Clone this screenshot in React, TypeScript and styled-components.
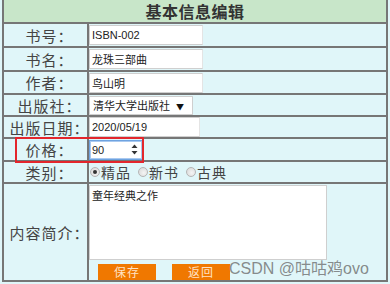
import React from 'react';
import styled, { createGlobalStyle } from 'styled-components';

const GlobalStyle = createGlobalStyle`
  html, body {
    margin: 0;
    padding: 0;
    background: #e0f6f9;
  }
  body {
    width: 390px;
    height: 284px;
    overflow: hidden;
    font-family: "Noto Sans CJK SC", sans-serif;
  }
`;

const Page = styled.div`
  position: relative;
  padding: 0 2px;
`;

const Form = styled.div`
  display: grid;
  grid-template-columns: 83px 297px;
  grid-template-rows: 22px 22px 22px 21px 20px 20px 21px 20px 96px;
  gap: 2px;
  width: 386px;
  box-sizing: border-box;
  background: #767676;
  border: 2px solid #767676;
  border-top: 0;
`;

const Title = styled.div`
  grid-column: 1 / span 2;
  background: #c8e6c9;
  display: flex;
  align-items: center;
  justify-content: center;
  font-size: 16px;
  font-weight: bold;
  color: #333;
  letter-spacing: 0.5px;
`;

const Label = styled.div`
  background: #e0f6f9;
  display: flex;
  align-items: center;
  justify-content: center;
  padding-left: 8px;
  font-size: 15px;
  color: #444;
  letter-spacing: 1px;
  white-space: nowrap;
`;

const Value = styled.div<{ $column?: boolean }>`
  background: #e0f6f9;
  display: flex;
  flex-direction: ${(p) => (p.$column ? 'column' : 'row')};
  align-items: ${(p) => (p.$column ? 'flex-start' : 'center')};
  overflow: hidden;
`;

const TextBox = styled.input<{ $w: number }>`
  width: ${(p) => p.$w}px;
  height: 20px;
  box-sizing: border-box;
  border: 1px solid #cfcfcf;
  border-right-color: #e4e4e4;
  background: #fff;
  padding: 0 2px;
  margin: 0;
  font-family: "Liberation Sans", "Noto Sans CJK SC", sans-serif;
  font-size: 11px;
  color: #222;
  outline: none;
`;

const SelectWrap = styled.div`
  position: relative;
  width: 104px;
  height: 19px;
  box-sizing: border-box;
  border: 1px solid #cfcfcf;
  background: #fff;
  display: flex;
  align-items: center;
  padding-left: 3px;
  font-size: 11px;
  color: #222;
`;

const Caret = styled.span`
  position: absolute;
  right: 8px;
  top: 4px;
  font-size: 8px;
  color: #111;
`;

const SpinBox = styled.div`
  width: 54px;
  height: 20px;
  box-sizing: border-box;
  border: 1px solid #6fa3e0;
  box-shadow: inset 0 0 0 1px #a9c9f0;
  background: #fff;
  display: flex;
  align-items: center;
  justify-content: space-between;
  padding: 0 4px 0 2px;
  font-family: "Liberation Sans", sans-serif;
  font-size: 11px;
  color: #222;
`;

const RadioGroup = styled.div`
  display: flex;
  align-items: center;
  gap: 7px;
  padding-left: 1px;
`;

const RadioItem = styled.label`
  display: flex;
  align-items: center;
  font-size: 14px;
  color: #444;
  letter-spacing: 1px;
`;

const Radio = styled.input`
  appearance: none;
  width: 10px;
  height: 10px;
  margin: 0 1px 0 0;
  border-radius: 50%;
  border: 1px solid #b5b5b5;
  background: radial-gradient(circle at 60% 60%, #f4f4f4, #d6d6d6);
  position: relative;
  &:checked::after {
    content: '';
    position: absolute;
    left: 2px;
    top: 2px;
    width: 4px;
    height: 4px;
    border-radius: 50%;
    background: #333;
  }
`;

const Intro = styled.textarea`
  width: 238px;
  height: 76px;
  box-sizing: border-box;
  margin: 1px 0 0 0;
  border: 1px solid #cfcfcf;
  background: #fff;
  padding: 2px 2px;
  resize: none;
  font-family: "Noto Sans CJK SC", sans-serif;
  font-size: 11px;
  line-height: 14px;
  color: #222;
  outline: none;
`;

const Buttons = styled.div`
  display: flex;
  gap: 16px;
  margin: 4px 0 0 9px;
`;

const Button = styled.button`
  width: 58px;
  height: 16px;
  border: 0;
  padding: 0;
  background: #f07800;
  color: #ffe2c4;
  font-family: "Noto Sans CJK SC", sans-serif;
  font-size: 12px;
  line-height: 16px;
  letter-spacing: 1px;
`;

const Highlight = styled.div`
  position: absolute;
  left: 15px;
  top: 137px;
  width: 129px;
  height: 26px;
  box-sizing: border-box;
  border: 2px solid #e3262c;
  pointer-events: none;
`;

const Watermark = styled.div`
  position: absolute;
  left: 229px;
  top: 255px;
  font-family: "Liberation Sans", "Noto Sans CJK SC", sans-serif;
  font-size: 16px;
  color: rgba(110, 110, 110, 0.8);
  white-space: nowrap;
  pointer-events: none;
`;

const Spinner = () => (
  <svg width="7" height="11" viewBox="0 0 7 11">
    <path d="M3.5 0.5 L6.5 4 L0.5 4 Z" fill="#333" />
    <path d="M3.5 10.5 L6.5 7 L0.5 7 Z" fill="#333" />
  </svg>
);

const App: React.FC = () => {
  return (
    <Page>
      <GlobalStyle />
      <Form>
        <Title>基本信息编辑</Title>

        <Label>书号：</Label>
        <Value>
          <TextBox $w={114} defaultValue="ISBN-002" />
        </Value>

        <Label>书名：</Label>
        <Value>
          <TextBox $w={114} defaultValue="龙珠三部曲" />
        </Value>

        <Label>作者：</Label>
        <Value>
          <TextBox $w={114} defaultValue="鸟山明" />
        </Value>

        <Label>出版社：</Label>
        <Value>
          <SelectWrap>
            清华大学出版社
            <Caret>▼</Caret>
          </SelectWrap>
        </Value>

        <Label>出版日期：</Label>
        <Value>
          <TextBox $w={111} defaultValue="2020/05/19" />
        </Value>

        <Label>价格：</Label>
        <Value>
          <SpinBox>
            <span>90</span>
            <Spinner />
          </SpinBox>
        </Value>

        <Label>类别：</Label>
        <Value>
          <RadioGroup>
            <RadioItem>
              <Radio type="radio" name="kind" defaultChecked />
              精品
            </RadioItem>
            <RadioItem>
              <Radio type="radio" name="kind" />
              新书
            </RadioItem>
            <RadioItem>
              <Radio type="radio" name="kind" />
              古典
            </RadioItem>
          </RadioGroup>
        </Value>

        <Label>内容简介：</Label>
        <Value $column>
          <Intro defaultValue="童年经典之作" />
          <Buttons>
            <Button>保存</Button>
            <Button>返回</Button>
          </Buttons>
        </Value>
      </Form>
      <Highlight />
      <Watermark>CSDN @咕咕鸡ovo</Watermark>
    </Page>
  );
};

export default App;
